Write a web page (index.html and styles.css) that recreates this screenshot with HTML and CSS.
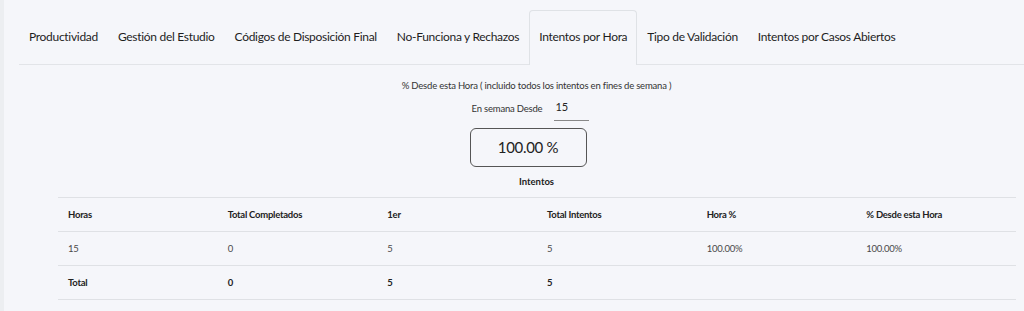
FILE: index.html
```html
<!DOCTYPE html>
<html>
<head>
    <meta charset="UTF-8">
    <title>Intentos por Hora</title>
    <link rel="stylesheet" href="styles.css">
</head>
<body>
    <div class="page">
        <ul class="tabs">
            <li class="tab">Productividad</li>
            <li class="tab">Gestión del Estudio</li>
            <li class="tab">Códigos de Disposición Final</li>
            <li class="tab">No-Funciona y Rechazos</li>
            <li class="tab active">Intentos por Hora</li>
            <li class="tab">Tipo de Validación</li>
            <li class="tab">Intentos por Casos Abiertos</li>
        </ul>
        <div class="pane">
            <div class="summary">
                <div class="summary-title">% Desde esta Hora ( incluido todos los intentos en fines de semana )</div>
                <div class="hour-row">
                    <label class="hour-label">En semana Desde</label>
                    <div class="hour-input">15</div>
                </div>
                <div class="percent-box">100.00 %</div>
                <div class="table-title">Intentos</div>
            </div>
            <table class="hours-table">
                <thead>
                    <tr>
                        <th>Horas</th>
                        <th>Total Completados</th>
                        <th>1er</th>
                        <th>Total Intentos</th>
                        <th>Hora %</th>
                        <th>% Desde esta Hora</th>
                    </tr>
                </thead>
                <tbody>
                    <tr>
                        <td>15</td>
                        <td>0</td>
                        <td>5</td>
                        <td>5</td>
                        <td>100.00%</td>
                        <td>100.00%</td>
                    </tr>
                    <tr class="total-row">
                        <td>Total</td>
                        <td>0</td>
                        <td>5</td>
                        <td>5</td>
                        <td></td>
                        <td></td>
                    </tr>
                </tbody>
            </table>
        </div>
    </div>
</body>
</html>
```

FILE: styles.css
```css
body {
    margin: 0;
    font-family: Lato, "Open Sans", sans-serif;
    background-color: #f5f6fa;
    color: #222;
    height: 311px;
    overflow: hidden;
}

.page {
    border-left: 4px solid #eceef1;
    padding-left: 15px;
    height: 100%;
}

.tabs {
    list-style: none;
    margin: 0;
    padding: 10px 0 0 0;
    display: flex;
    border-bottom: 1px solid #e2e4e8;
}

.tab {
    font-size: 12px;
    letter-spacing: -0.3px;
    padding: 0 9px;
    height: 53px;
    line-height: 52px;
    border: 1px solid transparent;
    border-bottom: none;
    margin-bottom: -1px;
    color: #1e1e1e;
}

.tab.active {
    border-color: #dfe2e6;
    border-radius: 4px 4px 0 0;
    background-color: #f5f6fa;
    height: 54px;
}

.pane {
    padding: 0 9px 0 39px;
}

.summary {
    display: flex;
    flex-direction: column;
    align-items: center;
}

.summary-title {
    font-size: 9.5px;
    letter-spacing: -0.2px;
    margin-top: 15px;
    line-height: 12px;
    color: #333;
}

.hour-row {
    display: flex;
    align-items: flex-start;
    gap: 12px;
    margin-top: 8px;
    margin-right: 12px;
}

.hour-label {
    font-size: 9.5px;
    letter-spacing: -0.2px;
    line-height: 14px;
    padding-top: 2px;
    color: #333;
}

.hour-input {
    width: 34px;
    font-size: 11px;
    line-height: 14px;
    padding-bottom: 6px;
    border-bottom: 1px solid #888;
    padding-left: 1px;
}

.percent-box {
    margin-top: 7px;
    margin-right: 17px;
    width: 115px;
    height: 37px;
    line-height: 37px;
    text-align: center;
    font-size: 15px;
    letter-spacing: -0.3px;
    color: #222;
    border: 1px solid #555;
    border-radius: 6px;
}

.table-title {
    font-size: 9.5px;
    font-weight: bold;
    margin-top: 9px;
    line-height: 12px;
    color: #222;
}

.hours-table {
    width: 958px;
    border-collapse: collapse;
    margin-top: 9px;
    table-layout: fixed;
}

.hours-table th,
.hours-table td {
    text-align: left;
    font-size: 9.5px;
    letter-spacing: -0.25px;
    height: 33px;
    padding: 0 10px;
    border-top: 1px solid #dfe1e5;
    border-bottom: 1px solid #dfe1e5;
}

.hours-table th {
    font-weight: bold;
    color: #222;
}

.hours-table td {
    color: #4a4a4a;
}

.total-row td {
    font-weight: bold;
    color: #222;
}
```
